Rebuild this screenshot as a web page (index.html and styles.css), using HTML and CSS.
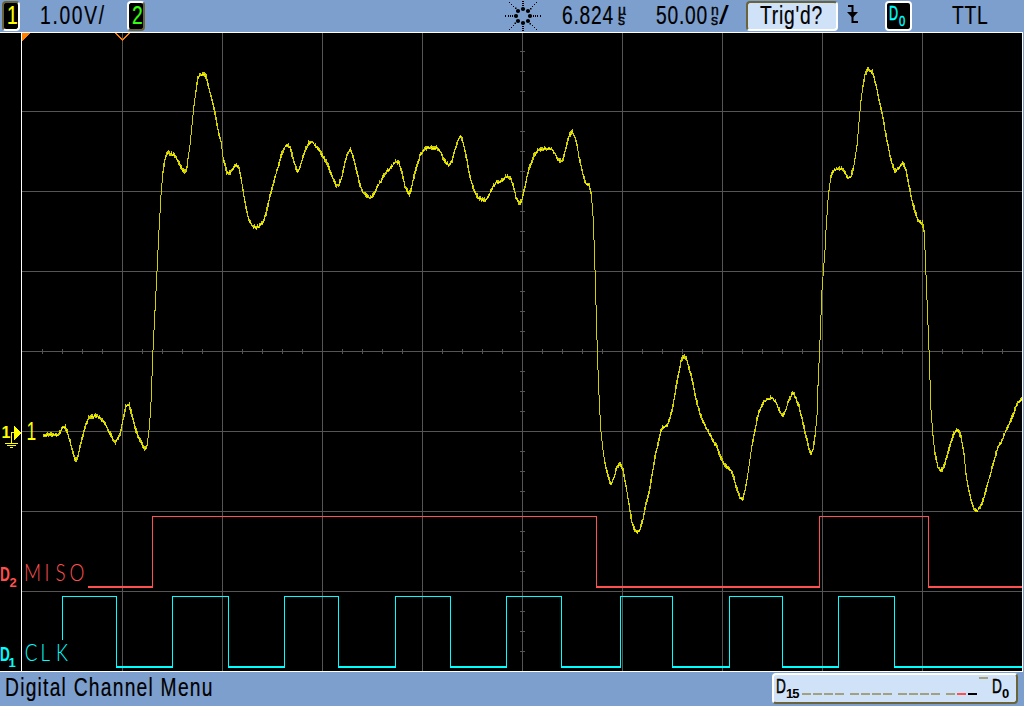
FILE: index.html
```html
<!DOCTYPE html>
<html lang="en">
<head>
    <meta charset="UTF-8">
    <title>Oscilloscope</title>
    <link rel="stylesheet" href="styles.css">
</head>
<body>

<header class="status-bar">
    <div class="badge badge-on"><span class="lcd yellow">1</span></div>
    <span class="lcd wide">1.00V/</span>
    <div class="badge"><span class="lcd green">2</span></div>
    <svg class="logo" width="38" height="32" viewBox="-19 -16 38 32">
        <defs>
            <g id="straight">
                <circle cx="0" cy="-7" r="2.1"/>
                <path d="M-1 -11h2v1h-2zM-1 -13h2v1h-2zM-1 -15h2v1h-2z"/>
            </g>
            <g id="diagonal">
                <circle cx="5" cy="-5" r="2.1"/>
                <path d="M7 -8h1.500v1.500h-1.500zM9 -10h1v1h-1zM11 -12h1v1h-1zM13 -14h1v1h-1z"/>
            </g>
        </defs>
        <use href="#straight"/>
        <use href="#straight" transform="rotate(90)"/>
        <use href="#straight" transform="rotate(180)"/>
        <use href="#straight" transform="rotate(270)"/>
        <use href="#diagonal"/>
        <use href="#diagonal" transform="rotate(90)"/>
        <use href="#diagonal" transform="rotate(180)"/>
        <use href="#diagonal" transform="rotate(270)"/>
        <path d="M-18 -1h1v2h-1zM17 -1h1v2h-1z"/>
    </svg>
    <span class="lcd">6.824</span>
    <span class="unit"><i>µ</i><i>s</i></span>
    <span class="lcd">50.00</span>
    <span class="unit"><i>n</i><i>s</i></span>
    <span class="lcd slash">/</span>
    <div class="trig"><span class="lcd">Trig'd?</span></div>
    <svg class="edge" width="12" height="32" viewBox="0 0 12 32">
        <path d="M1 6h4.500v16h5.500" fill="none" stroke="#000" stroke-width="2"/>
        <path d="M0 12h11l-5.500 6z"/>
    </svg>
    <div class="badge badge-digital"><span class="lcd">D</span><span class="lcd sub">0</span></div>
    <span class="lcd">TTL</span>
</header>

<svg class="scope" width="1024" height="640" viewBox="0 32 1024 640">
    <rect x="1023" y="32" width="1" height="640" class="edge-strip"/>
    <g id="grid" class="grid"></g>
    <path class="frame" d="M0 32.500H1022.500V671.500H0M21.500 32V672"/>

    <!-- trigger and time reference markers -->
    <path class="orange" d="M22 33h8l-8 8z"/>
    <path class="chevron" d="M115.500 33l7 7l7 -7"/>

    <!-- analog channel 1 -->
    <path id="traceDim" class="trace-dim"/>
    <path id="traceBright" class="trace-bright"/>
    <text class="ch-num" x="1.500" y="438">1</text>
    <path class="marker" d="M14 426v14l8 -7z"/>
    <path class="ground" d="M14 432.500H11.500V443M5 443.500h13M7 445.500h9M10 447.500h3"/>
    <text class="ch-label" transform="scale(0.7 1)" x="38" y="440">1</text>

    <!-- digital channels -->
    <path class="miso" d="M152.500 587V516.500H596.500V587M819.500 587V516.500H928.500V587"/>
    <path class="miso thick" d="M88 587H153M596 587H820M928 587H1022"/>
    <path class="clk" d="M62.500 640V596.500H116.500V667M172.500 667V596.500H228.500V667M284.500 667V596.500H338.500V667M395.500 667V596.500H450.500V667M506.500 667V596.500H561.500V667M620.500 667V596.500H672.500V667M729.500 667V596.500H782.500V667M838.500 667V596.500H894.500V667"/>
    <path class="clk thick" d="M116 667H173M228 667H285M338 667H396M450 667H507M561 667H621M672 667H730M782 667H839M894 667H1022"/>
    <g class="red">
        <text class="d-name" transform="scale(0.65 1)" x="0" y="581">D</text>
        <text class="d-sub" x="9.500" y="587">2</text>
        <text class="trace-name" transform="scale(0.8 1)" x="30 55.500 69.500 87" y="581">MISO</text>
    </g>
    <g class="cyan">
        <text class="d-name" transform="scale(0.65 1)" x="0" y="661">D</text>
        <text class="d-sub" x="8.500" y="667">1</text>
        <text class="trace-name" transform="scale(0.8 1)" x="31 50.500 70" y="661">CLK</text>
    </g>
</svg>

<footer class="menu-bar">
    <span class="lcd menu-title">Digital Channel Menu</span>
    <div class="digital-status">
        <span class="lcd pin">D</span><span class="pin-sub">15</span>
        <div class="bits">
            <b></b><b></b><b></b><b></b>
            <b class="gap"></b><b></b><b></b><b></b>
            <b class="gap"></b><b></b><b></b><b></b>
            <b class="gap"></b><b class="bit-red"></b><b class="bit-black"></b><b class="bit-high"></b>
        </div>
        <span class="lcd pin">D</span><span class="pin-sub">0</span>
    </div>
</footer>

<script src="scope.js"></script>
</body>
</html>
```
FILE: styles.css
```css
* {
    box-sizing: border-box;
}

body {
    margin: 0;
    width: 1024px;
    height: 706px;
    overflow: hidden;
    background: #000;
    color: #000;
    font-family: "Liberation Sans", Arial, sans-serif;
}

.status-bar {
    display: grid;
    grid-template-columns: 38px 87px 377px 58px 55px 39px 54px 9px 27px 101px 38px 67px 60px;
    height: 32px;
    padding-left: 2px;
    align-items: center;
    background: #7d9fce;
}

/* narrow bitmap-like lettering */
.lcd {
    display: inline-block;
    font-size: 25px;
    line-height: 28px;
    padding-bottom: 3px;
    letter-spacing: 1px;
    white-space: nowrap;
    transform: scaleX(0.77);
    transform-origin: 0 50%;
    -webkit-text-stroke: 0.200px;
}

.wide {
    letter-spacing: 2.200px;
}

.slash {
    transform: scaleX(1.4);
    -webkit-text-stroke: 0;
}

.badge {
    width: 18px;
    height: 30px;
    padding-left: 3px;
    background: #000;
    border: 2px solid #fff;
    border-right-color: #6b6438;
    border-bottom-color: #6b6438;
    border-radius: 4px;
}

.badge .lcd {
    line-height: 24px;
}

.badge-on {
    border-color: #6b6438 #fff #fff #6b6438;
}

.badge-digital {
    display: flex;
    width: 27px;
    padding-left: 2px;
    border-color: #fff;
    color: #0ff;
}

.badge-digital .lcd {
    width: 10px;
    font-size: 21px;
    line-height: 20px;
    transform: scaleX(0.6);
    -webkit-text-stroke: 0.400px #0ff;
}

.badge-digital .sub {
    margin-top: 10px;
    font-size: 15px;
    line-height: 16px;
    transform: scaleX(0.75);
}

.yellow {
    color: #ff0;
}

.green {
    color: #3f1;
}

.unit {
    display: flex;
    flex-direction: column;
    padding-left: 1px;
}

.unit i {
    height: 10px;
    font-size: 14px;
    font-style: normal;
    line-height: 8px;
    -webkit-text-stroke: 0.400px;
}

.trig {
    width: 92px;
    height: 30px;
    padding-left: 12px;
    background: #d0e2f8;
    border: 2px solid #6b6438;
    border-right-color: #fff;
    border-bottom-color: #fff;
    border-radius: 4px;
}

.trig .lcd {
    line-height: 24px;
}

.scope {
    display: block;
    background: #000;
    shape-rendering: crispEdges;
}

.edge-strip {
    fill: #7d9fce;
}

.grid {
    fill: #555;
}

.frame {
    fill: none;
    stroke: #fff;
}

.orange {
    fill: #ff8000;
}

.chevron {
    fill: none;
    stroke: #ff8000;
    stroke-width: 1.500;
}

.trace-dim {
    fill: #cfcf00;
}

.trace-bright, .marker, .ch-num, .ch-label {
    fill: #ff0;
}

.ground {
    fill: none;
    stroke: #ff0;
}

.ch-num {
    font-size: 16px;
    font-weight: bold;
}

.ch-label {
    font-size: 25px;
}

.miso {
    fill: none;
    stroke: #ff5050;
}

.clk {
    fill: none;
    stroke: #0ff;
}

.thick {
    stroke-width: 2;
}

.red {
    fill: #ff5050;
}

.cyan {
    fill: #0ff;
}

.d-name {
    font-size: 21px;
    font-weight: bold;
}

.d-sub {
    font-size: 13px;
    font-weight: bold;
}

.trace-name {
    font-family: Lato, sans-serif;
    font-size: 23.500px;
    font-weight: 300;
}

.menu-bar {
    display: flex;
    justify-content: space-between;
    height: 34px;
    padding: 1px 6px 0 5px;
    background: #7d9fce;
}

.menu-title {
    width: 300px;
    letter-spacing: 1.600px;
}

.digital-status {
    display: flex;
    width: 246px;
    height: 31px;
    padding-left: 2px;
    background: #d0e2f8;
    border: 2px solid #fff;
    border-right-color: #6b6438;
    border-bottom-color: #6b6438;
    border-radius: 4px;
}

.pin {
    flex: 0 0 10px;
    min-width: 0;
    font-size: 21px;
    line-height: 21px;
    transform: scaleX(0.65);
    -webkit-text-stroke: 0.500px #000;
}

.pin-sub {
    flex: 0 0 16px;
    padding-top: 12px;
    font-size: 13px;
    font-weight: bold;
    line-height: 14px;
    letter-spacing: -1px;
}

.bits {
    display: flex;
    flex: 0 0 190px;
    padding-top: 18px;
}

.bits b {
    width: 9px;
    height: 2px;
    margin-right: 2px;
    background: #a3a080;
}

.bits .gap {
    margin-left: 4px;
}

.bits .bit-red {
    background: #ff5050;
}

.bits .bit-black {
    background: #000;
}

.bits .bit-high {
    margin-top: -16px;
}
```
FILE: scope.js
```js
// graticule: 100px per time division, 80px per volt division
function drawGrid() {
    var grid = '';
    for (var x = 122; x < 1022; x += 100) {
        grid += '<rect x="' + x + '" y="33" width="1" height="638"/>';
    }
    for (var y = 111; y < 671; y += 80) {
        grid += '<rect x="22" y="' + y + '" width="1000" height="1"/>';
    }
    for (x = 42; x < 1022; x += 20) {
        grid += '<rect x="' + x + '" y="349" width="1" height="5"/>';
    }
    for (y = 51; y < 671; y += 20) {
        grid += '<rect x="520" y="' + y + '" width="5" height="1"/>';
    }
    document.getElementById('grid').innerHTML = grid;
}

// channel 1 samples as x,y pairs
var samples = [
    43,434, 59,434, 61,430, 63,426, 65,426, 67,431, 70,441, 73,452, 75,459, 77,459, 79,451, 82,438,
    84,431, 87,421, 89,416, 93,416, 96,415, 99,416, 103,421, 106,425, 109,431, 112,437, 115,442,
    117,439, 120,434, 122,424, 124,414, 126,405, 129,404, 131,411, 134,423, 136,430, 139,438,
    142,444, 145,449, 147,445, 149,430, 150,418, 151,402, 153,350, 155,310, 157,271, 158,250,
    159,230, 160,213, 161,195, 162,183, 163,171, 165,159, 168,152, 170,153, 173,154, 176,157,
    179,163, 182,169, 185,172, 187,168, 188,158, 190,145, 192,125, 194,105, 196,90, 198,78,
    200,74, 204,73, 206,76, 208,84, 210,92, 213,103, 215,113, 217,124, 219,133, 221,141, 223,157,
    225,165, 227,172, 230,172, 232,169, 236,165, 239,168, 241,177, 243,190, 245,202, 247,212,
    249,219, 252,225, 256,227, 260,225, 263,222, 266,213, 268,204, 270,195, 272,189, 275,177,
    278,167, 281,156, 284,148, 287,144, 290,147, 293,158, 296,168, 298,171, 300,167, 303,157,
    306,148, 309,142, 312,141, 315,145, 319,149, 323,156, 328,165, 332,175, 336,185, 339,184,
    342,176, 345,161, 348,152, 350,149, 353,156, 356,168, 360,185, 363,192, 367,196, 370,197,
    374,194, 378,185, 381,181, 385,173, 391,167, 396,161, 399,163, 402,173, 405,186, 409,194,
    411,189, 413,180, 416,169, 420,155, 423,150, 428,147, 436,147, 441,152, 444,160, 449,165,
    452,161, 455,149, 458,140, 461,136, 464,146, 467,160, 470,177, 474,190, 478,197, 484,200,
    488,197, 492,188, 497,181, 501,181, 506,176, 510,177, 513,184, 516,197, 519,204, 522,199,
    524,191, 527,176, 530,165, 534,155, 539,149, 545,148, 551,148, 556,155, 560,161, 563,159,
    566,147, 569,136, 572,131, 575,137, 577,144, 579,157, 582,170, 585,182, 589,185, 591,192,
    592,203, 593,216, 594,240, 595,270, 597,340, 598,370, 599,395, 600,415, 601,432, 603,450,
    605,463, 608,476, 611,484, 614,477, 617,467, 620,462, 623,470, 626,485, 629,505, 632,522,
    635,530, 637,532, 640,529, 643,519, 646,504, 649,492, 652,475, 655,457, 658,444, 661,430,
    663,427, 667,424, 669,421, 672,411, 675,393, 678,376, 681,361, 684,355, 687,360, 690,371,
    693,384, 697,402, 700,414, 704,423, 707,429, 712,438, 717,447, 721,457, 725,465, 731,470,
    734,478, 737,489, 740,497, 743,498, 746,486, 749,466, 752,445, 755,430, 757,419, 760,409,
    764,401, 768,398, 772,397, 776,402, 779,409, 783,416, 786,409, 789,399, 793,392, 796,398,
    799,406, 802,418, 806,436, 809,448, 811,453, 813,449, 815,437, 817,415, 818,385, 820,340,
    822,290, 825,250, 826,230, 827,215, 828,200, 829,190, 831,175, 833,170, 838,168, 842,168,
    845,172, 848,177, 851,176, 854,165, 857,145, 859,122, 861,100, 863,85, 865,74, 868,69,
    872,71, 876,84, 879,100, 882,112, 885,130, 888,145, 891,160, 895,171, 899,167, 903,163,
    906,170, 909,185, 912,200, 915,211, 918,220, 922,222, 924,230, 925,250, 927,300, 929,350,
    930,380, 931,410, 933,435, 935,454, 938,467, 941,471, 944,466, 948,453, 951,441, 954,433,
    958,429, 961,437, 964,453, 966,475, 969,490, 971,500, 974,508, 977,511, 980,507, 984,497,
    988,482, 991,472, 994,460, 998,446, 1002,440, 1007,428, 1011,419, 1015,409, 1018,402, 1022,399
];

var seed = 7;
function noise() {
    seed = (seed * 16807) % 2147483647;
    return seed / 2147483647;
}

var i = 0;
function level(px) {
    while (samples[i + 2] < px) {
        i += 2;
    }
    var t = (px - samples[i]) / (samples[i + 2] - samples[i]);
    return samples[i + 1] + t * (samples[i + 3] - samples[i + 1]);
}

// one vertical bar per pixel column, a bit fuzzy where the signal is flat
function drawTrace() {
    var dim = '';
    var bright = '';
    var last = level(43);
    for (var x = 43; x < 1022; x++) {
        var next = level(x + 1);
        var y = Math.round(Math.min(last, next));
        var height = Math.max(1, Math.round(Math.abs(next - last)));
        if (height < 7) {
            var up = Math.floor(noise() * 2.7);
            y -= up;
            height += up + 1 + Math.floor(noise() * 1.8);
        }
        dim += 'M' + x + ' ' + y + 'h1v' + height + 'h-1z';
        if (height < 8 && noise() > 0.3) {
            bright += 'M' + x + ' ' + (y + Math.floor(height / 2)) + 'h1v1h-1z';
        }
        last = next;
    }
    document.getElementById('traceDim').setAttribute('d', dim);
    document.getElementById('traceBright').setAttribute('d', bright);
}

drawGrid();
drawTrace();
```
